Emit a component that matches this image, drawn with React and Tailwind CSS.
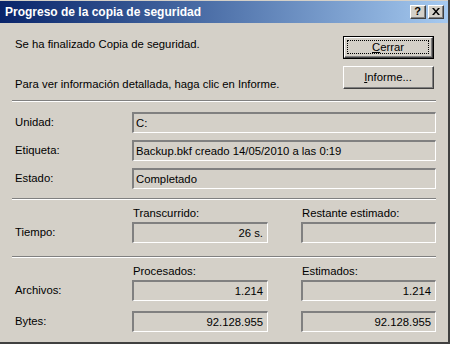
import React from "react";

const font = { fontFamily: '"Liberation Sans", Arial, sans-serif' };

function Field({ children, right, className = "" }) {
  return (
    <div
      className={
        "h-[21px] border-t-2 border-l-2 border-t-[#808080] border-l-[#808080] border-b border-r border-b-white border-r-white bg-[#d4d0c8] flex items-center px-[2px] text-[11.3px] text-black " +
        (right ? "justify-end pr-[4px] " : "") +
        className
      }
    >
      {children}
    </div>
  );
}

function Sep({ className = "" }) {
  return <div className={"h-[2px] border-t border-t-[#808080] border-b border-b-white " + className} />;
}

function Btn({ children, def }) {
  return (
    <div
      className={
        "h-[23px] w-[91px] flex items-center justify-center text-[11.3px] text-black bg-[#d4d0c8] " +
        (def ? "border border-black" : "")
      }
    >
      <div className="w-full h-full border-t border-l border-t-white border-l-white border-b border-r border-b-[#404040] border-r-[#404040] flex items-center justify-center">
        <div className={"w-full h-full flex items-center justify-center border-r border-b border-r-[#808080] border-b-[#808080] " + (def ? "p-[2px]" : "")}>
          {def ? (
            <div className="w-full h-full border border-dotted border-black flex items-center justify-center">{children}</div>
          ) : (
            children
          )}
        </div>
      </div>
    </div>
  );
}

function TitleBtn({ children }) {
  return (
    <div className="w-[16px] h-[14px] bg-[#d4d0c8] border-t border-l border-t-white border-l-white border-b border-r border-b-[#404040] border-r-[#404040]">
      <div className="w-full h-full border-r border-b border-r-[#808080] border-b-[#808080] flex items-center justify-center text-[11px] font-bold text-black leading-none">
        {children}
      </div>
    </div>
  );
}

export default function App() {
  return (
    <div className="w-[450px] h-[344px] bg-[#d4d0c8] relative overflow-hidden text-[11.3px] text-black" style={font}>
      <div className="w-full h-full border-r-2 border-b-2 border-r-[#404040] border-b-[#404040] flex flex-col">
        <div className="h-[22px] flex items-center justify-between pl-[5px] pr-[4px] bg-gradient-to-r from-[#0a246a] to-[#a6caf0] mt-[1px]">
          <span className="text-white font-bold text-[12px]">Progreso de la copia de seguridad</span>
          <div className="flex gap-[2px]">
            <TitleBtn>?</TitleBtn>
            <TitleBtn>
              <svg width="8" height="7" viewBox="0 0 8 7">
                <path d="M0 0h2l2 2.5L6 0h2L5 3.5 8 7H6L4 4.5 2 7H0l3-3.5z" fill="black" />
              </svg>
            </TitleBtn>
          </div>
        </div>
        <div className="pl-[12px] pr-[12px] flex flex-col">
          <div className="flex justify-between pt-[13px] h-[66px]">
            <div className="flex flex-col pl-[3px]">
              <div className="mt-[2px] leading-[13px]">Se ha finalizado Copia de seguridad.</div>
              <div className="mt-[27px] leading-[13px]">Para ver información detallada, haga clic en Informe.</div>
            </div>
            <div className="flex flex-col gap-[7px] mr-[2px]">
              <Btn def>
                <span><u>C</u>errar</span>
              </Btn>
              <Btn>
                <span><u>I</u>nforme...</span>
              </Btn>
            </div>
          </div>
          <Sep className="mt-[11px]" />
          <div className="grid grid-cols-[120px_1fr] gap-y-[7px] mt-[10px] items-center">
            <div className="pl-[3px]">Unidad:</div>
            <Field>C:</Field>
            <div className="pl-[3px]">Etiqueta:</div>
            <Field>Backup.bkf creado 14/05/2010 a las 0:19</Field>
            <div className="pl-[3px]">Estado:</div>
            <Field>Completado</Field>
          </div>
          <Sep className="mt-[9px]" />
          <div className="grid grid-cols-[120px_136px_1fr] mt-[6px] items-center">
            <div className="h-[14px]" />
            <div className="leading-[14px] pl-[1px]">Transcurrido:</div>
            <div className="leading-[14px] pl-[34px]">Restante estimado:</div>
            <div className="pl-[3px] mt-[2px]">Tiempo:</div>
            <Field right className="mt-[2px]">26 s.</Field>
            <div className="pl-[33px] mt-[2px]"><Field /></div>
          </div>
          <Sep className="mt-[13px]" />
          <div className="grid grid-cols-[120px_136px_1fr] mt-[6px] items-center">
            <div className="h-[14px]" />
            <div className="leading-[14px] pl-[1px]">Procesados:</div>
            <div className="leading-[14px] pl-[34px]">Estimados:</div>
            <div className="pl-[3px] mt-[2px]">Archivos:</div>
            <Field right className="mt-[2px]">1.214</Field>
            <div className="pl-[33px] mt-[2px]"><Field right>1.214</Field></div>
            <div className="pl-[3px] mt-[10px]">Bytes:</div>
            <Field right className="mt-[10px]">92.128.955</Field>
            <div className="pl-[33px] mt-[10px]"><Field right>92.128.955</Field></div>
          </div>
        </div>
      </div>
    </div>
  );
}
